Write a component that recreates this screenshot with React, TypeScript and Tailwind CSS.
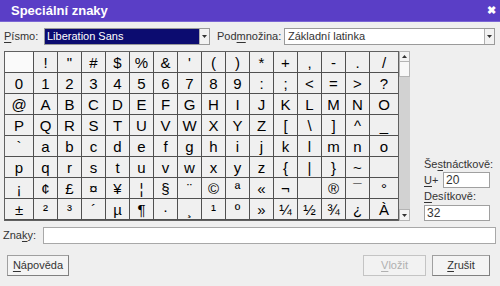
const rows: string[][] = [
  [' ', '!', '"', '#', '$', '%', '&', "'", '(', ')', '*', '+', ',', '-', '.', '/'],
  ['0', '1', '2', '3', '4', '5', '6', '7', '8', '9', ':', ';', '<', '=', '>', '?'],
  ['@', 'A', 'B', 'C', 'D', 'E', 'F', 'G', 'H', 'I', 'J', 'K', 'L', 'M', 'N', 'O'],
  ['P', 'Q', 'R', 'S', 'T', 'U', 'V', 'W', 'X', 'Y', 'Z', '[', '\\', ']', '^', '_'],
  ['`', 'a', 'b', 'c', 'd', 'e', 'f', 'g', 'h', 'i', 'j', 'k', 'l', 'm', 'n', 'o'],
  ['p', 'q', 'r', 's', 't', 'u', 'v', 'w', 'x', 'y', 'z', '{', '|', '}', '~', ' '],
  ['¡', '¢', '£', '¤', '¥', '¦', '§', '¨', '©', 'ª', '«', '¬', ' ', '®', '¯', '°'],
  ['±', '²', '³', '´', 'µ', '¶', '·', '¸', '¹', 'º', '»', '¼', '½', '¾', '¿', 'À'],
]

function Ul({ children }: { children: string }) {
  return <span className="underline underline-offset-2">{children}</span>
}

function Arrow({ up }: { up?: boolean }) {
  return (
    <svg width="5" height="3" viewBox="0 0 5 3">
      <path d={up ? 'M0 3 L2.5 0 L5 3 Z' : 'M0 0 L2.5 3 L5 0 Z'} fill="#333" />
    </svg>
  )
}

function DropButton() {
  return (
    <div className="w-[10px] h-[15px] bg-[#f2f2f2] border-l border-[#b0b0b0] flex items-center justify-center">
      <Arrow />
    </div>
  )
}

export default function App() {
  return (
    <div className="w-[500px] h-[286px] bg-[#efefef] flex flex-col font-['Liberation_Sans',sans-serif] text-[11px] text-[#333] overflow-hidden">
      {/* title bar */}
      <div className="h-[22px] bg-[#5a3ec6] border-b border-[#7a66d4] flex items-center justify-between pl-[11px] pr-[4px]">
        <span className="text-white font-bold text-[13px]">Speciální znaky</span>
        <span className="text-white font-bold text-[11px] leading-none">✖</span>
      </div>

      {/* font / subset */}
      <div className="mt-[6px] h-[17px] flex items-center pl-[4px]">
        <span className="w-[40px]"><Ul>P</Ul>ísmo:</span>
        <div className="w-[166px] h-[17px] bg-[#0c0c70] border border-[#9a9a9a] flex items-center justify-between">
          <span className="text-white pl-[2px]">Liberation Sans</span>
          <DropButton />
        </div>
        <span className="ml-[7px] w-[67px]">Pod<Ul>m</Ul>nožina:</span>
        <div className="w-[211px] h-[17px] bg-white border border-[#9a9a9a] flex items-center justify-between">
          <span className="pl-[3px]">Základní latinka</span>
          <DropButton />
        </div>
      </div>

      {/* grid + side panel */}
      <div className="mt-[6px] flex pl-[4px]">
        <div className="grid grid-cols-[28px_repeat(14,23px)_28px] grid-rows-[repeat(8,20px)] gap-px bg-[#505050] border border-[#606060] text-[15px] text-black">
          {rows.flat().map((ch, i) => (
            <div
              key={i}
              className={`flex items-center justify-center leading-none ${i === 0 ? 'bg-[#fafafa]' : 'bg-[#f0f0f0]'}`}
            >
              {ch.trim()}
            </div>
          ))}
        </div>
        <div className="w-[11px] h-[170px] bg-[#d2d2d2] flex flex-col justify-between">
          <div>
            <div className="h-[11px] bg-[#f4f4f4] border border-[#b4b4b4] flex items-center justify-center">
              <Arrow up />
            </div>
            <div className="h-[15px] bg-[#f8f8f8] border border-t-0 border-[#b4b4b4]" />
          </div>
          <div className="h-[12px] bg-[#f4f4f4] border border-[#b4b4b4] flex items-center justify-center">
            <Arrow />
          </div>
        </div>
        <div className="ml-[14px] w-[70px] flex flex-col justify-end">
          <div className="leading-[14px] mb-[1px]">Še<Ul>s</Ul>tnáctkově:</div>
          <div className="flex items-center">
            <span className="w-[19px]"><Ul>U</Ul>+</span>
            <div className="w-[47px] h-[16px] bg-white border border-[#a0a0a0] pl-[2px] leading-[14px] text-[12px]">20</div>
          </div>
          <div className="leading-[14px] mt-[1px] mb-[2px]"><Ul>D</Ul>esítkově:</div>
          <div className="w-[66px] h-[16px] bg-white border border-[#a0a0a0] pl-[2px] leading-[14px] text-[12px]">32</div>
        </div>
      </div>

      {/* characters */}
      <div className="mt-[6px] flex items-center pl-[3px] pr-[4px]">
        <span className="w-[40px]">Zna<Ul>k</Ul>y:</span>
        <div className="flex-1 h-[17px] bg-white border border-[#a8a8a8]" />
      </div>

      {/* buttons */}
      <div className="mt-[11px] flex items-center pl-[7px] pr-[10px]">
        <button className="w-[62px] h-[21px] bg-[#f4f4f4] border border-[#a0a0a0] border-r-[#808080] border-b-[#808080]">
          <Ul>N</Ul>ápověda
        </button>
        <div className="flex-1" />
        <button className="w-[63px] h-[21px] bg-[#f2f2f2] border border-[#c4c4c4] text-[#b0b0b0]">
          <Ul>V</Ul>ložit
        </button>
        <button className="ml-[6px] w-[58px] h-[21px] bg-[#f4f4f4] border border-[#a0a0a0] border-r-[#808080] border-b-[#808080]">
          <Ul>Z</Ul>rušit
        </button>
      </div>
    </div>
  )
}
